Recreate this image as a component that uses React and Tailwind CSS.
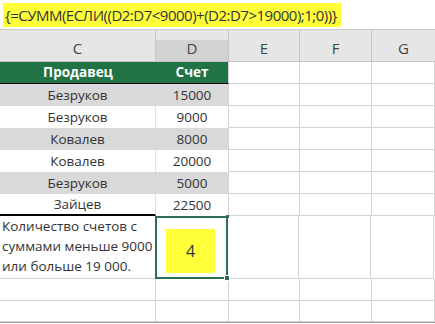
import React from 'react';

const cols = ['w-[156px]', 'w-[73px]', 'w-[71px]', 'w-[72px]', 'w-[63px]'];

const sales = [
  { name: 'Безруков', sum: '15000' },
  { name: 'Безруков', sum: '9000' },
  { name: 'Ковалев', sum: '8000' },
  { name: 'Ковалев', sum: '20000' },
  { name: 'Безруков', sum: '5000' },
  { name: 'Зайцев', sum: '22500' },
];

// empty E, F, G cells at the right of every row
const EmptyCells = () => (
  <>
    <div className={`${cols[2]} h-full border-r border-b border-[#d4d4d4]`} />
    <div className={`${cols[3]} h-full border-r border-b border-[#d4d4d4]`} />
    <div className={`${cols[4]} h-full border-r border-b border-[#d4d4d4]`} />
  </>
);

const App = () => {
  return (
    <div
      className="w-[435px] h-[324px] bg-white overflow-hidden text-[#333]"
      style={{ fontFamily: '"Open Sans", "Noto Sans", sans-serif' }}
    >
      {/* formula bar */}
      <div className="h-[30px] border-b border-[#c8c8c8] pl-[3px] pt-[3px]">
        <span className="inline-block h-[24px] bg-[#ffff3a] pl-[2px] pr-[4px] text-[15px] leading-[24px] tracking-[-0.5px]">
          {'{=СУММ(ЕСЛИ((D2:D7<9000)+(D2:D7>19000);1;0))}'}
        </span>
      </div>

      {/* column letters */}
      <div className="flex h-[32px] bg-[#e6e6e6] border-b border-[#c6c6c6] text-[15px] text-[#444]">
        <div className={`${cols[0]} flex items-end justify-center pb-[2px] border-r border-[#c6c6c6]`}>C</div>
        <div className={`${cols[1]} pt-[10px] border-r border-[#c6c6c6]`}>
          <div className="h-full bg-[#d2d2d2] flex items-end justify-center pb-[2px]">D</div>
        </div>
        <div className={`${cols[2]} flex items-end justify-center pb-[2px] border-r border-[#c6c6c6]`}>E</div>
        <div className={`${cols[3]} flex items-end justify-center pb-[2px] border-r border-[#c6c6c6]`}>F</div>
        <div className={`${cols[4]} flex items-end justify-center pb-[2px]`}>G</div>
      </div>

      {/* table header */}
      <div className="flex h-[22px] text-[13.5px]">
        <div className={`${cols[0]} h-full bg-[#217346] border-b border-black text-white font-bold flex items-center justify-center`}>
          Продавец
        </div>
        <div className={`${cols[1]} h-full bg-[#217346] border-b border-black border-r border-r-[#d4d4d4] text-white font-bold flex items-center justify-center`}>
          Счет
        </div>
        <EmptyCells />
      </div>

      {sales.map((row, i) => (
        <div key={i} className="flex h-[22px] text-[13.5px]">
          <div
            className={`${cols[0]} h-full flex items-center justify-center border-r ${
              i % 2 === 0 ? 'bg-[#d9d9d9] border-[#d9d9d9]' : 'border-[#e2e2e2]'
            } ${i === 5 ? 'border-b-2 border-b-black' : ''}`}
          >
            {row.name}
          </div>
          <div
            className={`${cols[1]} h-full flex items-center justify-center border-r border-r-[#d4d4d4] ${
              i % 2 === 0 ? 'bg-[#d9d9d9]' : ''
            }`}
          >
            {row.sum}
          </div>
          <EmptyCells />
        </div>
      ))}

      {/* result row */}
      <div className="flex h-[63px]">
        <div className={`${cols[0]} h-full border-r border-b border-[#d4d4d4] text-[13.5px] leading-[20px] pl-[2px]`}>
          <div>Количество счетов с</div>
          <div>суммами меньше 9000</div>
          <div>или больше 19 000.</div>
        </div>
        <div className={`${cols[1]} h-full relative border-2 border-[#2f6e52] -ml-[1px] pl-[9px] pt-[11px]`}>
          <div className="w-[49px] h-[44px] bg-[#ffff3a] flex items-center justify-center text-[16px]">4</div>
          <span className="absolute -right-[4px] -bottom-[4px] w-[6px] h-[6px] bg-[#2f6e52] border border-white" />
          <span className="absolute -right-[3px] -top-[3px] w-[3px] h-[3px] bg-[#2f6e52]" />
        </div>
        <EmptyCells />
      </div>

      {[0, 1].map((r) => (
        <div key={r} className={`flex h-[22px] ${r === 1 ? 'border-b border-[#9a9a9a]' : ''}`}>
          <div className={`${cols[0]} h-full border-r border-b border-[#d4d4d4]`} />
          <div className={`${cols[1]} h-full border-r border-b border-[#d4d4d4]`} />
          <EmptyCells />
        </div>
      ))}
    </div>
  );
};

export default App;
